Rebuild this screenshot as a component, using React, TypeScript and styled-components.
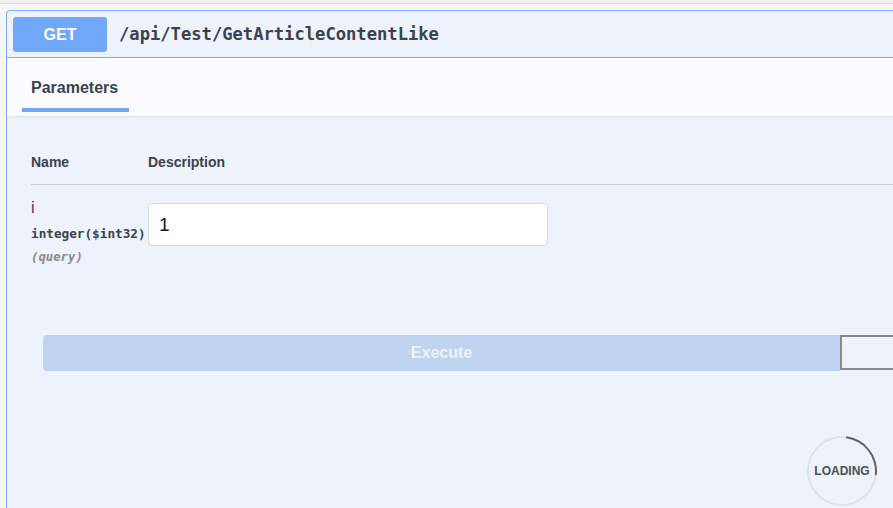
import React from "react";
import styled, { createGlobalStyle } from "styled-components";

const Global = createGlobalStyle`
  html, body { margin: 0; padding: 0; }
  body {
    background: #f6f6f7;
    overflow: hidden;
    width: 893px;
    height: 508px;
    font-family: "Liberation Sans", Arial, sans-serif;
    color: #3b4151;
  }
`;

const Page = styled.div`
  display: flex;
  flex-direction: column;
`;

const PrevEdge = styled.div`
  height: 3px;
  background: #f1f1f2;
  border-bottom: 1px solid #d9d9db;
`;

const Card = styled.div`
  margin: 6px 0 0 6px;
  width: 1672px;
  min-height: 560px;
  box-sizing: border-box;
  border: 1px solid #7eaef8;
  border-radius: 4px;
  background: #edf2fb;
  display: flex;
  flex-direction: column;
`;

const Summary = styled.div`
  height: 46px;
  display: flex;
  align-items: center;
  padding: 0 6px;
  border-bottom: 1px solid #7eaef8;
`;

const Method = styled.div`
  width: 94px;
  height: 35px;
  margin-top: 1px;
  border-radius: 3px;
  background: #72a8fa;
  color: #ffffff;
  font-weight: 700;
  font-size: 16px;
  display: flex;
  align-items: center;
  justify-content: center;
`;

const Path = styled.span`
  margin-left: 12px;
  font-family: "DejaVu Sans Mono", "Liberation Mono", monospace;
  font-weight: 600;
  font-size: 17.15px;
  color: #3b4151;
`;

const TabBar = styled.div`
  height: 58px;
  display: flex;
  align-items: flex-start;
  padding-left: 15px;
  background: #fafcff;
  box-shadow: 0 1px 2px rgba(0, 0, 0, 0.08);
  position: relative;
`;

const Tab = styled.div<{ $active?: boolean }>`
  padding: 20px 11px 11px 9px;
  font-size: 16px;
  line-height: 19px;
  font-weight: 700;
  color: #3b4151;
  border-bottom: 4px solid ${(p) => (p.$active ? "#72a8fa" : "transparent")};
`;

const Params = styled.div`
  padding: 38px 0 0 24px;
`;

const HeadRow = styled.div`
  display: grid;
  grid-template-columns: 117px 1fr;
  font-size: 14px;
  font-weight: 700;
  line-height: 16px;
  padding-bottom: 14px;
  border-bottom: 1px solid #c5cad4;
`;

const ParamRow = styled.div`
  display: grid;
  grid-template-columns: 117px 1fr;
  align-items: start;
  padding-top: 12px;
`;

const NameCell = styled.div`
  display: flex;
  flex-direction: column;
`;

const ParamName = styled.div`
  font-size: 16px;
  line-height: 22px;
  color: #3b4151;
`;

const ParamType = styled.div`
  margin-top: 6px;
  font-family: "DejaVu Sans Mono", "Liberation Mono", monospace;
  font-size: 12.7px;
  font-weight: 600;
  line-height: 18px;
  white-space: nowrap;
`;

const ParamIn = styled.div`
  margin-top: 5px;
  font-family: "DejaVu Sans Mono", "Liberation Mono", monospace;
  font-size: 12.3px;
  font-style: italic;
  font-weight: 600;
  line-height: 18px;
  color: #8a8a8a;
`;

const Input = styled.input`
  margin-top: 6px;
  width: 400px;
  height: 43px;
  box-sizing: border-box;
  border: 1px solid #d9d9d9;
  border-radius: 4px;
  background: #ffffff;
  padding: 0 10px;
  font-family: "Liberation Sans", Arial, sans-serif;
  font-size: 19px;
  color: #111827;
  outline: none;
`;

const ExecWrap = styled.div`
  display: flex;
  padding: 69px 36px 0;
`;

const ExecButton = styled.button`
  flex: 1;
  height: 36px;
  border: none;
  border-radius: 4px 0 0 4px;
  background: #c0d4f2;
  color: #eef3fb;
  font-family: "Liberation Sans", Arial, sans-serif;
  font-weight: 700;
  font-size: 16px;
`;

const ClearButton = styled.button`
  flex: 1;
  height: 35px;
  box-sizing: border-box;
  border: 2px solid #8a8a8a;
  border-radius: 0 4px 4px 0;
  background: #edf2fb;
`;

const LoadingArea = styled.div`
  display: flex;
  justify-content: center;
  padding-top: 65px;
`;

const Spinner = styled.div`
  position: relative;
  width: 70px;
  height: 70px;
  display: flex;
  align-items: center;
  justify-content: center;
  font-size: 12px;
  font-weight: 700;
  color: #4a4f5e;
  &::before {
    content: "";
    position: absolute;
    inset: 0;
    border-radius: 50%;
    border: 2px solid rgba(85, 85, 85, 0.1);
    border-top-color: rgba(0, 0, 0, 0.6);
    transform: rotate(52deg);
  }
`;

export default function App() {
  return (
    <Page>
      <Global />
      <PrevEdge />
      <Card>
        <Summary>
          <Method>GET</Method>
          <Path>/api/Test/GetArticleContentLike</Path>
        </Summary>
        <TabBar>
          <Tab $active>Parameters</Tab>
        </TabBar>
        <Params>
          <HeadRow>
            <div>Name</div>
            <div>Description</div>
          </HeadRow>
          <ParamRow>
            <NameCell>
              <ParamName>i</ParamName>
              <ParamType>integer($int32)</ParamType>
              <ParamIn>(query)</ParamIn>
            </NameCell>
            <Input defaultValue="1" />
          </ParamRow>
        </Params>
        <ExecWrap>
          <ExecButton>Execute</ExecButton>
          <ClearButton />
        </ExecWrap>
        <LoadingArea>
          <Spinner>LOADING</Spinner>
        </LoadingArea>
      </Card>
    </Page>
  );
}
